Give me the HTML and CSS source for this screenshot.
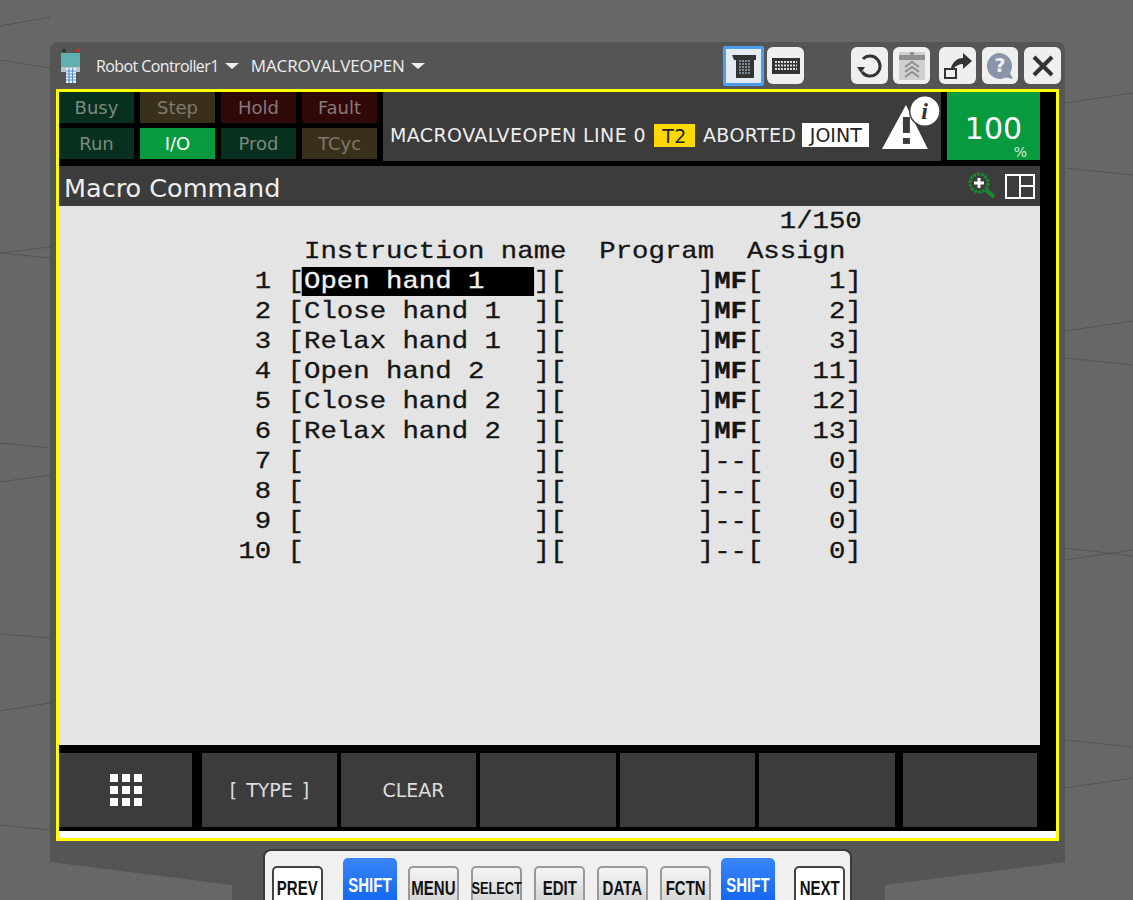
FILE: index.html
```html
<!DOCTYPE html>
<html lang="en">
<head>
  <meta charset="UTF-8">
  <title>Macro Command</title>
  <link rel="stylesheet" href="styles.css">
</head>
<body>
  <!-- scene lines behind the pendant -->
  <svg class="scene" width="1133" height="900" viewBox="0 0 1133 900">
    <g stroke="#555" stroke-width="1" fill="none">
      <path d="M0 26L50 17"/>
      <path d="M0 60L50 68"/>
      <path d="M0 253L50 247"/>
      <path d="M0 253L50 258"/>
      <path d="M0 443L50 448"/>
      <path d="M0 482L50 475"/>
      <path d="M0 634L50 638"/>
      <path d="M0 711L50 703"/>
      <path d="M0 825L50 830"/>
      <path d="M1065 103L1133 93"/>
      <path d="M1065 168L1133 175"/>
      <path d="M1065 331L1133 321"/>
      <path d="M1065 358L1133 365"/>
      <path d="M1065 548L1133 556"/>
      <path d="M1065 560L1133 550"/>
      <path d="M1065 740L1133 747"/>
      <path d="M1065 788L1133 778"/>
    </g>
  </svg>

  <div class="window">
    <div class="titlebar">
      <svg class="pendant" width="26" height="36" viewBox="0 0 26 36">
        <circle cx="6" cy="2.500" r="2" fill="#333"/>
        <circle cx="20" cy="2.500" r="2" fill="#b33"/>
        <rect x="3" y="5" width="19" height="14" fill="#5fb0b0"/>
        <rect x="3" y="19" width="19" height="5" fill="#b9c4c4"/>
        <rect x="8" y="20" width="10" height="15" fill="#f2f5f8"/>
        <path d="M8 23h10M8 26h10M8 29h10M8 32h10M11 20v15M14.500 20v15" stroke="#5a8fd0" stroke-width="1.200"/>
      </svg>
      <span class="menu menu-ctrl">Robot Controller1<i class="caret"></i></span>
      <span class="menu menu-prog">MACROVALVEOPEN<i class="caret"></i></span>

      <div class="tools">
        <div class="tool selected">
          <svg width="28" height="28" viewBox="0 0 28 28">
            <path d="M2 3h24v5h-2v18H6V8H4z" fill="#333"/>
            <path d="M9 9h12M9 12h12M9 15h12M9 18h12M9 21h12" stroke="#9aa8bd" stroke-width="1.600" stroke-dasharray="2 1"/>
          </svg>
        </div>
        <div class="tool tool-kbd">
          <svg width="28" height="16" viewBox="0 0 28 16">
            <rect width="28" height="16" fill="#333"/>
            <path d="M3 4h22M3 7.500h22M3 11h22" stroke="#ddd" stroke-width="2" stroke-dasharray="2 1"/>
          </svg>
        </div>
        <div class="tool tool-refresh">
          <svg width="28" height="28" viewBox="0 0 28 28" fill="none">
            <path d="M7 7A10 10 0 1 1 6 20" stroke="#333" stroke-width="3"/>
            <path d="M1 15l8 0-4 6z" fill="#333"/>
          </svg>
        </div>
        <div class="tool tool-next">
          <svg width="28" height="32" viewBox="0 0 28 32">
            <rect x="1" y="2" width="26" height="28" fill="#cfcfcf"/>
            <rect x="1" y="5" width="26" height="5" fill="#8f8f8f"/>
            <rect x="12" y="2" width="4" height="8" fill="#8f8f8f"/>
            <path d="M7 17l7-5 7 5M7 22l7-5 7 5M7 27l7-5 7 5" fill="none" stroke="#8f8f8f" stroke-width="2"/>
          </svg>
        </div>
        <div class="tool tool-share">
          <svg width="30" height="28" viewBox="0 0 30 28" fill="none">
            <path d="M2 17h11v9H2z" stroke="#333" stroke-width="2"/>
            <path d="M8 16C10 9 15 6 20 6V1l9 8-9 8v-5c-4 0-7 2-9 4z" fill="#333"/>
          </svg>
        </div>
        <div class="tool tool-help">
          <svg width="30" height="30" viewBox="0 0 30 30">
            <path d="M15 2a13 13 0 1 0 6 24.500L28 28l-3-6A13 13 0 0 0 15 2z" fill="#8a94a8"/>
            <text x="15" y="21" class="help-mark">?</text>
          </svg>
        </div>
        <div class="tool">
          <svg width="24" height="24" viewBox="0 0 24 24">
            <path d="M3 3L21 21M21 3L3 21" stroke="#333" stroke-width="4"/>
          </svg>
        </div>
      </div>
    </div>

    <div class="frame">
      <div class="status">
        <div class="leds">
          <span class="led green">Busy</span>
          <span class="led amber">Step</span>
          <span class="led red">Hold</span>
          <span class="led red">Fault</span>
          <span class="led green">Run</span>
          <span class="led on">I/O</span>
          <span class="led green">Prod</span>
          <span class="led amber">TCyc</span>
        </div>
        <div class="info">
          <span class="info-text">MACROVALVEOPEN LINE 0</span>
          <span class="badge-t2">T2</span>
          <span class="info-text">ABORTED</span>
          <span class="badge-joint">JOINT</span>
          <svg class="alert" width="60" height="55" viewBox="0 0 60 55">
            <path d="M25 10L1 54h46z" fill="#fff"/>
            <rect x="22" y="22" width="7" height="16" fill="#3c3c3c"/>
            <rect x="22" y="43" width="7" height="6" fill="#3c3c3c"/>
            <circle cx="44" cy="16" r="16" fill="#3c3c3c"/>
            <circle cx="44" cy="16" r="14.500" fill="#fff"/>
            <text x="44" y="24" class="info-mark">i</text>
          </svg>
        </div>
        <div class="override">100<span class="percent">%</span></div>
      </div>

      <div class="header">
        <span class="header-title">Macro Command</span>
        <svg width="30" height="30" viewBox="0 0 30 30" fill="none">
          <circle cx="12" cy="12" r="9" stroke="#1c8a2e" stroke-width="3" stroke-dasharray="3 1"/>
          <path d="M19 19l8 7" stroke="#1c8a2e" stroke-width="4"/>
          <path d="M12 7v10M7 12h10" stroke="#fff" stroke-width="3"/>
        </svg>
        <svg width="30" height="25" viewBox="0 0 30 25" fill="none" stroke="#fff" stroke-width="2">
          <rect x="1" y="1" width="28" height="23"/>
          <path d="M15 1v23M15 12h14"/>
        </svg>
      </div>

      <div class="screen">
<pre class="line">                                  1/150</pre>
<pre class="line">     Instruction name  Program  Assign</pre>
<pre class="line">  1 [<span class="cursor">Open hand 1   </span>][        ]<b>MF</b>[    1]</pre>
<pre class="line">  2 [Close hand 1  ][        ]<b>MF</b>[    2]</pre>
<pre class="line">  3 [Relax hand 1  ][        ]<b>MF</b>[    3]</pre>
<pre class="line">  4 [Open hand 2   ][        ]<b>MF</b>[   11]</pre>
<pre class="line">  5 [Close hand 2  ][        ]<b>MF</b>[   12]</pre>
<pre class="line">  6 [Relax hand 2  ][        ]<b>MF</b>[   13]</pre>
<pre class="line">  7 [              ][        ]--[    0]</pre>
<pre class="line">  8 [              ][        ]--[    0]</pre>
<pre class="line">  9 [              ][        ]--[    0]</pre>
<pre class="line"> 10 [              ][        ]--[    0]</pre>
      </div>

      <div class="fkeys">
        <div class="fkey fkey-grid">
          <svg width="32" height="32" viewBox="0 0 32 32" fill="#fff">
            <rect x="0" y="0" width="8" height="8"/><rect x="12" y="0" width="8" height="8"/><rect x="24" y="0" width="8" height="8"/>
            <rect x="0" y="12" width="8" height="8"/><rect x="12" y="12" width="8" height="8"/><rect x="24" y="12" width="8" height="8"/>
            <rect x="0" y="24" width="8" height="8"/><rect x="12" y="24" width="8" height="8"/><rect x="24" y="24" width="8" height="8"/>
          </svg>
        </div>
        <div class="fkey fkey-type">[ TYPE ]</div>
        <div class="fkey fkey-clear">CLEAR</div>
        <div class="fkey fkey-wide"></div>
        <div class="fkey"></div>
        <div class="fkey fkey-wide fkey-gap"></div>
        <div class="fkey fkey-last"></div>
      </div>
      <div class="strip"></div>
    </div>

    <div class="keypad">
      <span class="key edge key-prev"><span class="key-text">PREV</span></span>
      <span class="key shift shift-left"><span class="key-text">SHIFT</span></span>
      <span class="key"><span class="key-text">MENU</span></span>
      <span class="key small"><span class="key-text">SELECT</span></span>
      <span class="key"><span class="key-text">EDIT</span></span>
      <span class="key"><span class="key-text">DATA</span></span>
      <span class="key"><span class="key-text">FCTN</span></span>
      <span class="key shift shift-right"><span class="key-text">SHIFT</span></span>
      <span class="key edge"><span class="key-text">NEXT</span></span>
    </div>
  </div>
</body>
</html>
```

FILE: styles.css
```css
html, body {
  margin: 0;
  height: 900px;
  overflow: hidden;
}
body {
  background: #676767;
  font-family: "DejaVu Sans", sans-serif;
  position: relative;
}
.scene {
  position: absolute;
  top: 0;
  left: 0;
}

/* pendant body */
.window {
  position: relative;
  width: 1015px;
  height: 858px;
  margin: 42px 0 0 50px;
  background: #555;
  border-radius: 8px 8px 0 0;
  clip-path: polygon(0 0, 100% 0, 100% 820px, 835px 843px, 835px 100%, 182px 100%, 182px 843px, 0 820px);
}
.titlebar {
  height: 47px;
  display: flex;
  align-items: center;
  padding: 0 4px 0 8px;
}
.pendant {
  margin-right: 12px;
}
.menu {
  color: #eee;
  font-family: "Open Sans", sans-serif;
  font-size: 16px;
  letter-spacing: -0.6px;
  margin-right: 12px;
  display: flex;
  align-items: center;
}
.menu-prog {
  font-size: 17px;
  letter-spacing: -0.1px;
}
.caret {
  width: 0;
  height: 0;
  border-left: 7px solid transparent;
  border-right: 7px solid transparent;
  border-top: 6px solid #eee;
  margin-left: 6px;
}
.tools {
  margin-left: auto;
  display: flex;
  align-items: center;
  gap: 6px;
}
.tool {
  width: 37px;
  height: 37px;
  background: #efefef;
  border-radius: 6px;
  display: flex;
  align-items: center;
  justify-content: center;
}
.tool.selected {
  width: 35px;
  height: 34px;
  border: 3px solid #4d9df0;
  border-radius: 2px;
  background: #e3ebf5;
}
.tool-kbd {
  margin-left: -3px;
}
.tool-refresh {
  margin: 0 -1px 0 41px;
}
.tool-next {
  margin-right: 3px;
}
.tool-help {
  width: 36px;
}
.help-mark {
  font: bold 19px "DejaVu Sans", sans-serif;
  fill: #efefef;
  text-anchor: middle;
}
.info-mark {
  font: italic bold 24px "Liberation Serif", serif;
  fill: #333;
  text-anchor: middle;
}

/* yellow frame */
.frame {
  width: 997px;
  height: 746px;
  margin-left: 6px;
  border: 3px solid #ffff00;
  background: #000;
}
.status {
  display: flex;
  height: 69px;
  margin-bottom: 5px;
}
.leds {
  display: grid;
  grid-template-columns: repeat(4, 75px);
  grid-template-rows: 31px 31px;
  gap: 5px 6px;
  margin-right: 6px;
}
.led {
  display: flex;
  align-items: center;
  justify-content: center;
  font-size: 18px;
  color: #7b8a80;
}
.led.green { background: #08301f; }
.led.amber { background: #38301a; color: #80796a; }
.led.red { background: #300808; color: #86797a; }
.led.on { background: #079a3e; color: #fff; }
.info {
  width: 551px;
  height: 55px;
  padding: 0 0 14px 7px;
  background: #3c3c3c;
  display: flex;
  align-items: flex-end;
  color: #eee;
  font-size: 19px;
  letter-spacing: 0.4px;
}
.info-text {
  white-space: nowrap;
  line-height: 23px;
}
.badge-t2 {
  width: 41px;
  height: 23px;
  margin: 0 8px 0 8px;
  background: #ffd800;
  color: #222;
  display: flex;
  align-items: center;
  justify-content: center;
}
.badge-joint {
  width: 67px;
  height: 24px;
  margin-left: 6px;
  background: #fff;
  color: #222;
  display: flex;
  align-items: center;
  justify-content: center;
  letter-spacing: 0;
}
.alert {
  align-self: flex-start;
  margin: 3px 0 0 12px;
}
.override {
  width: 93px;
  height: 64px;
  padding-top: 4px;
  margin-left: 6px;
  background: #079a3e;
  color: #fff;
  font-size: 30px;
  display: flex;
  align-items: center;
  justify-content: center;
  position: relative;
}
.percent {
  position: absolute;
  right: 13px;
  bottom: 0;
  font-size: 14px;
  color: #d6f0dc;
}
.header {
  height: 40px;
  background: #3c3c3c;
  display: flex;
  align-items: center;
  gap: 8px;
  padding: 0 5px;
  margin-right: 16px;
}
.header-title {
  color: #eee;
  font-size: 25.5px;
  margin: 3px auto 0 0;
}

/* program table */
.screen {
  height: 539px;
  margin-right: 16px;
  background: #e4e4e4;
  box-sizing: border-box;
  padding: 1px 0 0 163px;
  overflow: hidden;
}
.line {
  margin: 0;
  height: 30px;
  line-height: 30px;
  font-family: "Liberation Mono", monospace;
  font-size: 24px;
  color: #151515;
  -webkit-text-stroke: 0.3px #151515;
  transform: scaleX(1.139);
  transform-origin: 0 0;
}
.line b {
  font-weight: bold;
}
.cursor {
  display: inline-block;
  height: 29px;
  line-height: 29px;
  vertical-align: top;
  background: #000;
  color: #f4f4f4;
  -webkit-text-stroke: 0.3px #f4f4f4;
  box-shadow: -2px 0 0 #000;
}
.fkeys {
  display: flex;
  margin: 8px 19px 4px 0;
  height: 74px;
  gap: 4px;
}
.fkey {
  width: 135px;
  background: #3c3c3c;
  color: #ddd;
  font-size: 19px;
  display: flex;
  align-items: center;
  justify-content: center;
}
.fkey-grid { width: 133px; margin-right: 6px; }
.fkey-type { word-spacing: 3px; }
.fkey-clear { box-sizing: border-box; padding-left: 10px; }
.fkey-wide { width: 136px; }
.fkey-gap { margin-right: 4px; }
.fkey-last { width: 134px; }
.strip {
  height: 7px;
  background: #fff;
}

/* hardware keys */
.keypad {
  width: 589px;
  height: 60px;
  box-sizing: border-box;
  margin: 8px 0 0 213px;
  padding: 7px 0 0 7px;
  background: #f0f0f0;
  border: 2px solid #3a3a3a;
  border-radius: 8px 8px 0 0;
  display: flex;
  align-items: flex-start;
  gap: 12px;
}
.key {
  width: 51px;
  height: 44px;
  margin-top: 8px;
  box-sizing: border-box;
  padding-top: 9px;
  background: linear-gradient(#f5f5f5, #cfcfcf);
  border: 2px solid #999;
  border-radius: 5px;
  color: #111;
  font: bold 20px "Liberation Sans", sans-serif;
  display: flex;
  align-items: flex-start;
  justify-content: center;
}
.key-text {
  transform: scaleX(0.75);
  white-space: nowrap;
}
.key.small {
  font-size: 17px;
  padding-top: 11px;
}
.key.edge {
  border-color: #444;
  background: #fff;
}
.key-prev {
  margin-right: 8px;
}
.key.shift {
  width: 54px;
  height: 50px;
  margin-top: 0;
  background: linear-gradient(#3a86f8, #0d62ee);
  border: 0;
  color: #fff;
  padding-top: 16px;
}
.shift-left {
  margin-right: -1px;
}
.shift-right {
  margin: 0 7px 0 -2px;
}
```
